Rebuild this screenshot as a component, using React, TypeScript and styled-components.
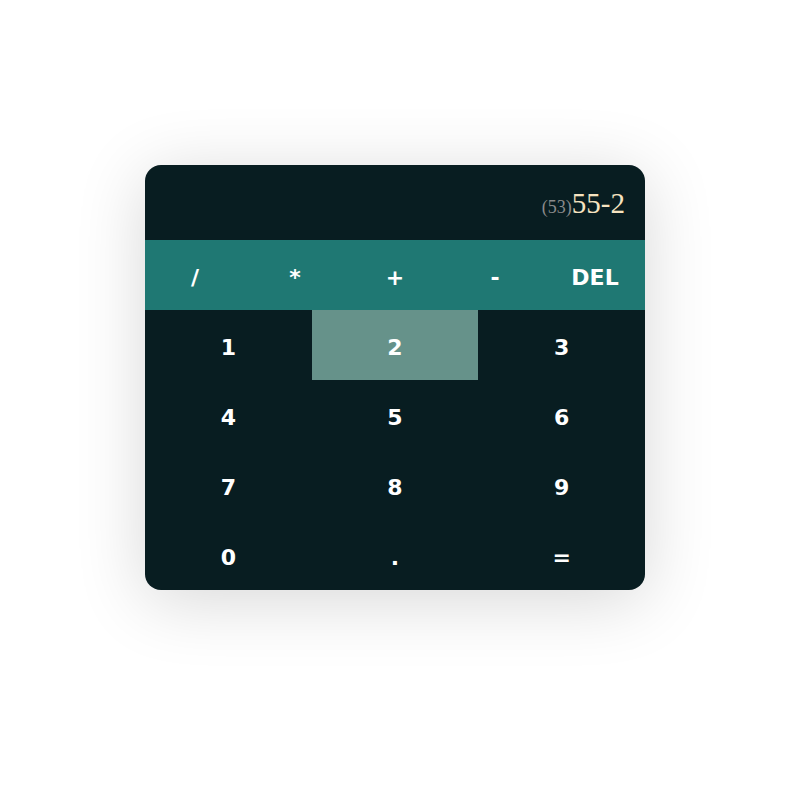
import React from "react";
import styled, { createGlobalStyle } from "styled-components";

const Global = createGlobalStyle`
  html, body { margin: 0; padding: 0; background: #ffffff; }
  body { font-family: "DejaVu Sans", Verdana, sans-serif; }
`;

const Page = styled.div`
  padding: 165px 0 0 145px;
  min-height: 785px;
  box-sizing: border-box;
`;

const Card = styled.div`
  width: 500px;
  height: 425px;
  background: #081d21;
  border-radius: 16px;
  overflow: hidden;
  box-shadow: 0 10px 70px rgba(0, 0, 0, 0.16);
  display: flex;
  flex-direction: column;
`;

const Display = styled.div`
  height: 75px;
  display: flex;
  align-items: center;
  justify-content: flex-end;
  padding: 2px 20px 0;
  font-family: "Liberation Serif", "Times New Roman", serif;
  color: #f6e3c0;
  font-size: 29px;
  box-sizing: border-box;
`;

const Readout = styled.div`
  line-height: 1;
`;

const Prev = styled.span`
  font-size: 18px;
  color: #8a8a8a;
`;

const Operators = styled.div`
  height: 70px;
  background: #1f7873;
  display: grid;
  grid-template-columns: repeat(5, 1fr);
`;

const Keypad = styled.div`
  display: grid;
  grid-template-columns: repeat(3, 1fr);
  grid-auto-rows: 70px;
`;

const Key = styled.button<{ $active?: boolean }>`
  border: none;
  margin: 0;
  padding: 4px 0 0;
  background: ${(p) => (p.$active ? "#66928a" : "transparent")};
  color: #ffffff;
  font-family: "DejaVu Sans", Verdana, sans-serif;
  font-weight: bold;
  font-size: 22px;
  display: flex;
  align-items: center;
  justify-content: center;
  cursor: pointer;
`;

export default function App() {
  const ops = ["/", "*", "+", "-", "DEL"];
  const digits = ["1", "2", "3", "4", "5", "6", "7", "8", "9", "0", ".", "="];
  return (
    <>
      <Global />
      <Page>
        <Card>
          <Display>
            <Readout>
              <Prev>(53)</Prev>55-2
            </Readout>
          </Display>
          <Operators>
            {ops.map((o) => (
              <Key key={o}>{o}</Key>
            ))}
          </Operators>
          <Keypad>
            {digits.map((d) => (
              <Key key={d} $active={d === "2"}>
                {d}
              </Key>
            ))}
          </Keypad>
        </Card>
      </Page>
    </>
  );
}
